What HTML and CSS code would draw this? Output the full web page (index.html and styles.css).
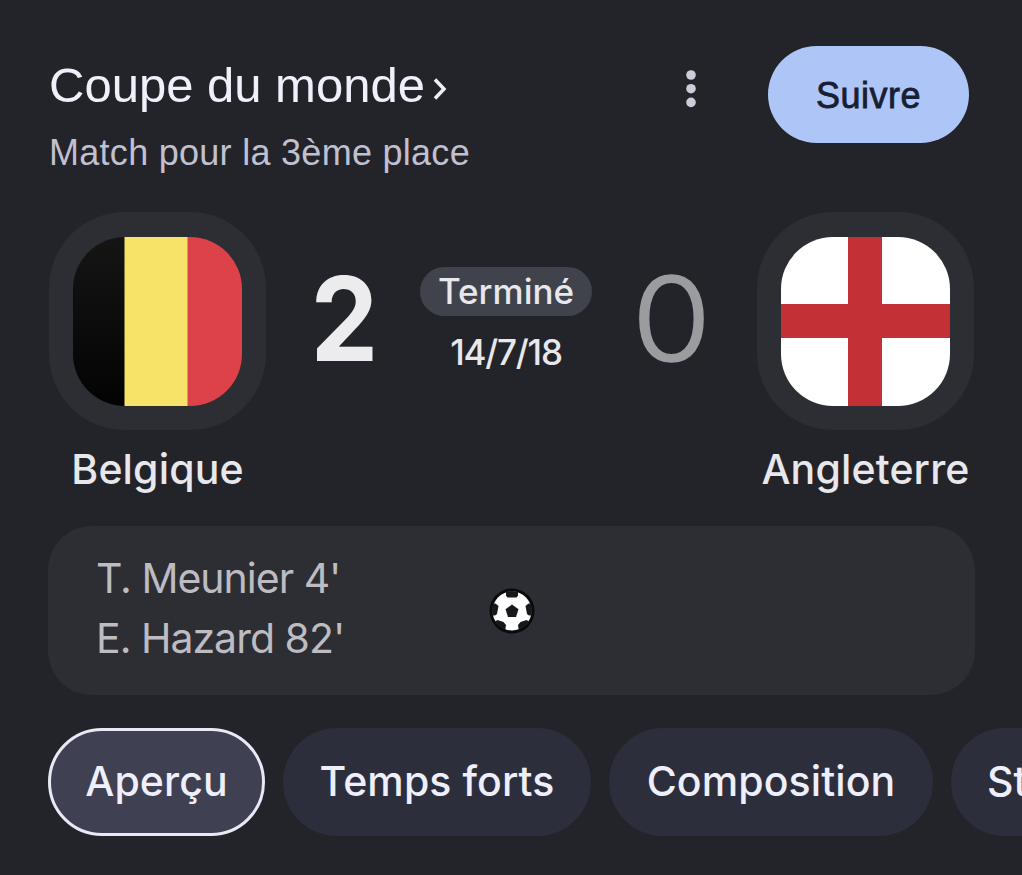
FILE: index.html
```html
<!DOCTYPE html>
<html lang="fr">
<head>
<meta charset="utf-8">
<title>Coupe du monde</title>
<link rel="stylesheet" href="styles.css">
</head>
<body>
<main class="match">
  <header class="head">
    <div class="heading">
      <h1 class="title"><span class="title-text">Coupe du monde</span><svg class="chevron" width="14" height="24" viewBox="0 0 14 24"><path d="M2 2.500 11 12 2 21.500" fill="none" stroke="#eeeefa" stroke-width="3.500"/></svg></h1>
      <p class="subtitle">Match pour la 3ème place</p>
    </div>
    <svg class="more" width="12" height="38" viewBox="0 0 12 38"><g fill="#cdccd8"><circle cx="6" cy="5" r="4.800"/><circle cx="6" cy="18.700" r="4.800"/><circle cx="6" cy="32.400" r="4.800"/></g></svg>
    <button class="follow">Suivre</button>
  </header>

  <section class="board">
    <div class="team">
      <div class="badge"><div class="flag belgium"></div></div>
      <div class="name name-home">Belgique</div>
    </div>
    <div class="score winner">2</div>
    <div class="status">
      <span class="state">Terminé</span>
      <span class="date">14/7/18</span>
    </div>
    <div class="score loser">0</div>
    <div class="team">
      <div class="badge"><div class="flag england"></div></div>
      <div class="name name-away">Angleterre</div>
    </div>
  </section>

  <section class="goals">
    <ul class="scorers">
      <li class="scorer-a">T. Meunier 4'</li>
      <li class="scorer-b">E. Hazard 82'</li>
    </ul>
    <svg class="ball" width="46" height="46" viewBox="0 0 46 46">
      <clipPath id="disc"><circle cx="23" cy="23" r="20"/></clipPath>
      <circle cx="23" cy="23" r="22.500" fill="#08090b"/>
      <circle cx="23" cy="23" r="19.500" fill="#fff"/>
      <g clip-path="url(#disc)" fill="#17181b">
        <path d="M17 2h12v5.500l-1.500 2h-9l-1.500-2z"/>
        <path d="M1 15.500H6.500L9.500 18 8 26 6 27.500H1z"/>
        <path d="M45 15.500H39.500L36.500 18 38 26 40 27.500H45z"/>
        <path d="M5 34 8.500 32 14.500 34 17 37 16 44H8z"/>
        <path d="M41 34 37.500 32 31.500 34 29 37 30 44H38z"/>
      </g>
      <path d="M23 16.500 29.500 21.200 27 29H19L16.500 21.200Z" fill="#17181b"/>
    </svg>
  </section>

  <nav class="tabs">
    <a class="tab active"><span>Aperçu</span></a>
    <a class="tab highlights"><span>Temps forts</span></a>
    <a class="tab lineup"><span>Composition</span></a>
    <a class="tab stats"><span>Statistiques</span></a>
  </nav>
</main>
</body>
</html>
```
FILE: styles.css
```css
* { box-sizing: border-box; }
body {
  margin: 0;
  background: #232429;
  color: #e8e8ec;
  font-family: Inter, "Liberation Sans", sans-serif;
  overflow: hidden;
}
h1, p, ul { margin: 0; padding: 0; font-weight: 400; }
ul { list-style: none; }

.match {
  width: 1022px;
  height: 875px;
  padding: 46px 0 0 48px;
  overflow: hidden;
}
.head {
  display: flex;
  align-items: flex-start;
  width: 921px;
  height: 166px;
}
.heading {
  flex: 1;
  padding-left: 1px;
  font-family: "Liberation Sans", Arial, sans-serif;
}
.title {
  display: flex;
  align-items: center;
  height: 78px;
  color: #f0f0fc;
  font-size: 49px;
  line-height: 78px;
  letter-spacing: 0;
}
.chevron { margin: 8px 0 0 8px; }
.subtitle {
  height: 56px;
  color: #c1c0d0;
  font-size: 36px;
  line-height: 58px;
  letter-spacing: 0.28px;
}
.more { margin: 24px 71px 0 0; }
.follow {
  width: 201px;
  height: 97px;
  padding: 2px 0 0;
  border: 0;
  border-radius: 49px;
  background: #aec6f7;
  color: #172033;
  font: 400 36px/1 "Liberation Sans", Arial, sans-serif;
  letter-spacing: 0.5px;
  -webkit-text-stroke: 0.8px #172033;
}

.board {
  display: grid;
  grid-template-columns: 217px 157px 167px 167px 217px;
  width: 925px;
  height: 314px;
  margin-left: 1px;
}
.team { display: flex; flex-direction: column; align-items: center; }
.badge {
  width: 217px;
  height: 218px;
  padding: 25px 24px;
  border-radius: 76px;
  background: #2d2e33;
}
.flag { width: 169px; height: 169px; border-radius: 52px; }
.belgium {
  background:
    linear-gradient(90deg, transparent 51px, #f6e368 52px 114px, #dd4248 115px),
    linear-gradient(#151515, #030303);
}
.england {
  background:
    linear-gradient(90deg, transparent 67px, #c33036 67px 101px, transparent 101px),
    linear-gradient(#fff 67px, #c33036 67px 101px, #fff 101px);
}
.name {
  height: 80px;
  font-size: 41px;
  font-weight: 500;
  line-height: 78px;
  letter-spacing: 0.15px;
  white-space: nowrap;
}
.score { padding-top: 35px; font-size: 117px; line-height: 143px; text-align: center; }
.winner { font-weight: 700; color: #ececee; transform: scaleX(0.92); }
.loser {
  color: #9b9c9e;
  font-weight: 300;
  transform: translateX(-2px) scaleX(1.1);
  -webkit-text-stroke: 1.5px #9b9c9e;
}
.status {
  display: flex;
  flex-direction: column;
  align-items: center;
  width: 172px;
  margin-left: -3px;
  padding-top: 55px;
}
.state {
  width: 172px;
  height: 49px;
  border-radius: 25px;
  background: #40434b;
  font-size: 35px;
  font-weight: 500;
  line-height: 48px;
  text-align: center;
}
.date {
  margin-top: 11px;
  font-size: 35px;
  font-weight: 500;
  line-height: 50px;
  letter-spacing: -1.2px;
}

.goals {
  display: flex;
  align-items: center;
  width: 927px;
  height: 169px;
  padding-left: 48px;
  border-radius: 44px;
  background: #2d2e33;
}
.scorers {
  width: 393px;
  color: #bcbcc2;
  font-size: 41px;
  line-height: 60px;
  letter-spacing: -1px;
  padding-bottom: 5px;
}

.tabs { display: flex; gap: 18px; margin-top: 33px; }
.tab {
  display: flex;
  flex: none;
  align-items: center;
  justify-content: center;
  height: 108px;
  padding-bottom: 2px;
  border-radius: 54px;
  background: #2d2e3b;
  color: #eeeffb;
  font-size: 41px;
  font-weight: 500;
  letter-spacing: 0.1px;
}
.active { width: 217px; border: 3px solid #e9e9f5; background: #3f4051; }
.highlights { width: 308px; }
.lineup { width: 324px; }
.stats { width: 330px; justify-content: flex-start; padding-left: 36px; }
```
